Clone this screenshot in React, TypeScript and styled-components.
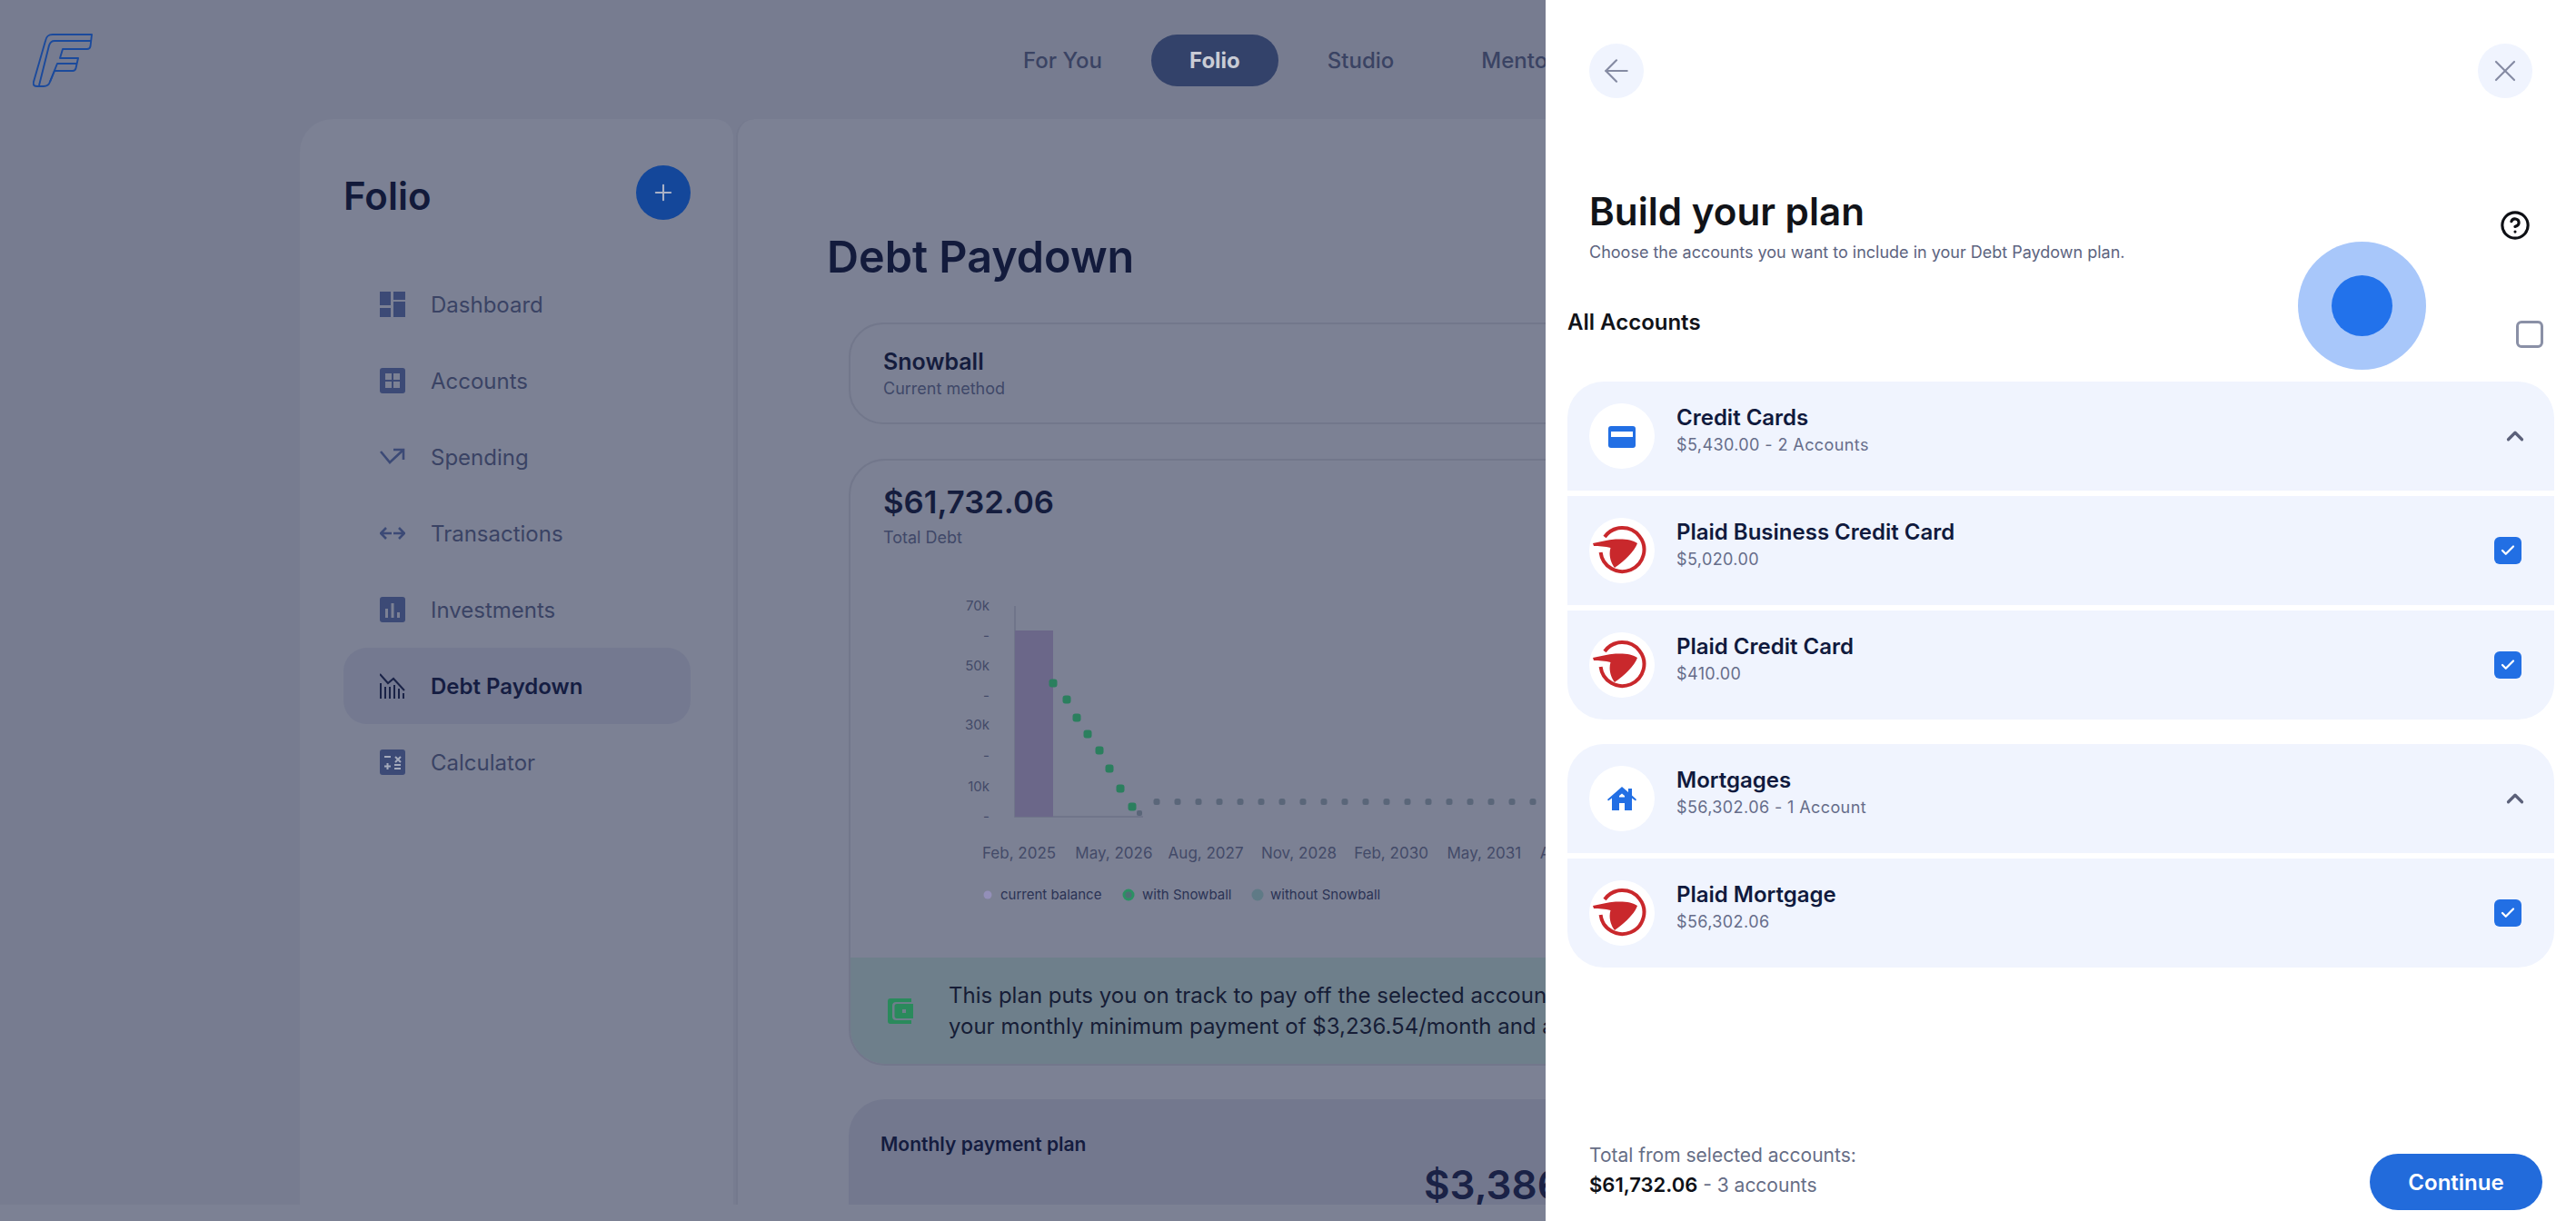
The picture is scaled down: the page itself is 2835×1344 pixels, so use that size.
import React from "react";
import styled, { createGlobalStyle } from "styled-components";
import { ArrowLeft, X, CircleHelp, ChevronUp, Plus, Check } from "lucide-react";

const Global = createGlobalStyle`
  html, body { margin: 0; padding: 0; background: #7c8194; }
  body { font-family: Inter, "Noto Sans", sans-serif; }
  * { box-sizing: border-box; }
`;

const Page = styled.div`
  position: relative;
  width: 2835px;
  height: 1344px;
  overflow: hidden;
  background: #7c8194;
`;
const Shell = styled.div`
  height: 1326px;
  background: #777c90;
  display: flex;
  flex-direction: column;
  overflow: hidden;
`;
const TopBar = styled.header`
  height: 131px;
  flex: none;
  display: flex;
  align-items: flex-start;
  padding: 37px 0 0 36px;
`;
const LogoMark = styled.svg`
  width: 66px;
  height: 59px;
  flex: none;
`;
const TopNav = styled.nav`
  display: flex;
  gap: 12px;
  margin: 1px 0 0 982px;
`;
const TopLink = styled.a<{ $active?: boolean }>`
  height: 57px;
  padding: 0 42px;
  border-radius: 29px;
  display: flex;
  align-items: center;
  font-size: 24px;
  font-weight: ${(p) => (p.$active ? 700 : 500)};
  color: ${(p) => (p.$active ? "#c9ccd5" : "#3a4363")};
  background: ${(p) => (p.$active ? "#33426a" : "transparent")};
`;
const Body = styled.div`
  flex: 1;
  min-height: 0;
  display: flex;
  gap: 3px;
  padding-left: 330px;
`;
const Sidebar = styled.aside`
  width: 477px;
  flex: none;
  background: #7c8194;
  border-radius: 36px 20px 0 0;
  padding: 51px 47px 0 48px;
`;
const SideHead = styled.div`
  height: 60px;
  display: flex;
  align-items: center;
  justify-content: space-between;
  margin-bottom: 51px;
`;
const SideTitle = styled.h2`
  margin: 6px 0 0;
  font-size: 42px;
  font-weight: 600;
  color: #121a3a;
`;
const RoundAdd = styled.button`
  width: 60px;
  height: 60px;
  border: 0;
  padding: 0;
  border-radius: 50%;
  background: #14479a;
  color: #a9b1c6;
  display: flex;
  align-items: center;
  justify-content: center;
`;
const SideItem = styled.a<{ $active?: boolean }>`
  height: 84px;
  display: flex;
  align-items: center;
  gap: 28px;
  padding-left: 40px;
  border-radius: 26px;
  font-size: 24px;
  font-weight: ${(p) => (p.$active ? 600 : 400)};
  color: ${(p) => (p.$active ? "#151d42" : "#3a4364")};
  background: ${(p) => (p.$active ? "#747990" : "transparent")};
`;
const SideIcon = styled.svg`
  width: 28px;
  height: 28px;
  flex: none;
`;
const Main = styled.main`
  flex: 1;
  min-width: 0;
  background: #7c8194;
  border-left: 2px solid #74798d;
  border-radius: 20px 0 0 0;
  padding: 122px 120px 0 122px;
  overflow: hidden;
`;
const PageTitle = styled.h1`
  margin: 0 0 42px -24px;
  height: 60px;
  line-height: 60px;
  font-size: 48.500px;
  font-weight: 600;
  color: #131b3c;
`;
const MethodCard = styled.section`
  height: 112px;
  border: 2px solid #72778b;
  border-radius: 38px;
  padding: 25px 36px;
  margin-bottom: 38px;
`;
const MethodName = styled.div`
  font-size: 25px;
  line-height: 32px;
  font-weight: 600;
  color: #141c3d;
`;
const MethodHint = styled.div`
  font-size: 18px;
  line-height: 24px;
  margin-top: 2px;
  color: #3f4868;
`;
const DebtCard = styled.section`
  height: 668px;
  border: 2px solid #72778b;
  border-radius: 40px;
  display: flex;
  flex-direction: column;
  overflow: hidden;
  margin-bottom: 37px;
`;
const DebtHead = styled.div`
  padding: 23px 36px 0;
`;
const DebtValue = styled.div`
  font-size: 34.700px;
  line-height: 44px;
  font-weight: 600;
  color: #151d3e;
`;
const DebtLabel = styled.div`
  margin-top: 6px;
  font-size: 18px;
  line-height: 24px;
  color: #404868;
`;
const ChartSvg = styled.svg`
  display: block;
  width: 1000px;
  height: 360px;
  margin: 46px 0 0 36px;
  flex: none;
`;
const AxisText = styled.text<{ $small?: boolean }>`
  font-family: Inter, sans-serif;
  font-size: ${(p) => (p.$small ? 15 : 17)}px;
  fill: #434a68;
`;
const LegendText = styled.text`
  font-family: Inter, sans-serif;
  font-size: 15px;
  fill: #2b3354;
`;
const Notice = styled.div`
  margin-top: auto;
  height: 117px;
  background: #6e7f8b;
  display: flex;
  align-items: center;
  gap: 38px;
  padding-left: 40px;
  font-size: 24px;
  line-height: 34px;
  color: #161d36;
  white-space: nowrap;
`;
const NoticeIcon = styled.svg`
  width: 30px;
  height: 30px;
  flex: none;
`;
const PlanCard = styled.section`
  height: 200px;
  background: #73788e;
  border-radius: 40px;
  padding: 36px 35px;
  position: relative;
`;
const PlanLabel = styled.div`
  font-size: 21px;
  line-height: 28px;
  font-weight: 600;
  color: #141c3f;
`;
const PlanValue = styled.div`
  margin: 3px 0 0 598px;
  font-size: 44px;
  line-height: 54px;
  font-weight: 600;
  color: #1a2246;
`;

const Drawer = styled.aside`
  position: absolute;
  top: 0;
  right: 0;
  bottom: 0;
  width: 1134px;
  background: #ffffff;
  display: flex;
  flex-direction: column;
`;
const DrawerTop = styled.div`
  display: flex;
  justify-content: space-between;
  padding: 48px 48px 0;
`;
const CircleBtn = styled.button`
  width: 60px;
  height: 60px;
  border: 0;
  padding: 0;
  border-radius: 50%;
  background: #f0f4fe;
  color: #858ba3;
  display: flex;
  align-items: center;
  justify-content: center;
`;
const Intro = styled.div`
  display: flex;
  justify-content: space-between;
  align-items: flex-start;
  padding: 0 50px 0 48px;
  margin-top: 98px;
  height: 83px;
`;
const DrawerTitle = styled.h2`
  margin: 0;
  font-size: 42.200px;
  line-height: 54px;
  font-weight: 600;
  color: #111318;
`;
const DrawerSub = styled.p`
  margin: 6px 0 0;
  font-size: 18px;
  line-height: 24px;
  color: #5d6480;
`;
const HelpWrap = styled.div`
  margin-top: 25px;
  color: #0d0f14;
  display: flex;
`;
const AllRow = styled.div`
  display: flex;
  justify-content: space-between;
  align-items: flex-start;
  height: 43px;
  margin: 50px 0 38px;
  padding: 0 36px 0 24px;
  font-size: 24px;
  line-height: 32px;
  font-weight: 600;
  color: #111318;
`;
const EmptyBox = styled.span`
  width: 30px;
  height: 30px;
  margin-top: 14px;
  border: 3px solid #8a90a6;
  border-radius: 6px;
  background: #fff;
`;
const Groups = styled.div`
  display: flex;
  flex-direction: column;
  gap: 27px;
  margin: 0 24px;
`;
const Group = styled.div`
  display: flex;
  flex-direction: column;
  gap: 6px;
  border-radius: 40px;
  overflow: hidden;
`;
const Row = styled.div`
  height: 120px;
  background: #f0f4fe;
  display: flex;
  align-items: center;
  gap: 24px;
  padding: 0 36px 0 24px;
`;
const Badge = styled.div`
  width: 72px;
  height: 72px;
  flex: none;
  border-radius: 50%;
  background: #fff;
`;
const BadgeArt = styled.svg`
  display: block;
  width: 72px;
  height: 72px;
`;
const RowText = styled.div`
  flex: 1;
  min-width: 0;
  margin-bottom: 14px;
`;
const RowTitle = styled.div`
  font-size: 24px;
  line-height: 32px;
  font-weight: 600;
  color: #101a3d;
`;
const RowSub = styled.div`
  margin-top: 1px;
  font-size: 18px;
  line-height: 26px;
  letter-spacing: 0.4px;
  color: #666d8a;
`;
const Chevron = styled.div`
  color: #5b6079;
  display: flex;
  margin-right: -8px;
`;
const TickBox = styled.span`
  width: 30px;
  height: 30px;
  border-radius: 6px;
  background: #226fe4;
  color: #fff;
  display: flex;
  align-items: center;
  justify-content: center;
`;
const Footer = styled.div`
  margin-top: auto;
  display: flex;
  justify-content: space-between;
  align-items: flex-end;
  padding: 0 37px 12px 48px;
`;
const Totals = styled.div`
  margin-bottom: 11px;
  font-size: 21px;
  line-height: 32px;
  color: #666d85;
`;
const TotalsValue = styled.strong`
  font-size: 22px;
  font-weight: 600;
  color: #0e1016;
`;
const ContinueBtn = styled.button`
  width: 190px;
  height: 62px;
  border: 0;
  border-radius: 31px;
  background: #226bdb;
  color: #fff;
  font-family: inherit;
  font-size: 24px;
  font-weight: 600;
`;
const Pulse = styled.div`
  position: absolute;
  left: 828px;
  top: 266px;
  width: 141px;
  height: 141px;
  border-radius: 50%;
  background: #a8c7fa;
  display: flex;
  align-items: center;
  justify-content: center;
`;
const PulseCore = styled.div`
  width: 67px;
  height: 67px;
  border-radius: 50%;
  background: #2272eb;
`;

const ICON = "#3c4a76";

const icons: Record<string, React.ReactNode> = {
  dashboard: (
    <g fill={ICON}>
      <rect x="0" y="0" width="12" height="15" />
      <rect x="15" y="0" width="13" height="9" />
      <rect x="15" y="11" width="13" height="17" />
      <rect x="0" y="18" width="12" height="10" />
    </g>
  ),
  accounts: (
    <g>
      <rect width="28" height="28" rx="3" fill={ICON} />
      <g fill="#7c8194">
        <rect x="6" y="6" width="7" height="7" />
        <rect x="15" y="6" width="7" height="7" />
        <rect x="6" y="15" width="7" height="7" />
        <rect x="15" y="15" width="7" height="7" />
      </g>
    </g>
  ),
  spending: (
    <g fill="none" stroke={ICON} strokeWidth="2.6">
      <polyline points="1,8 11,20 25,7" />
      <polyline points="15,6 26,6 26,17" />
    </g>
  ),
  transactions: (
    <g fill="none" stroke={ICON} strokeWidth="2.6">
      <path d="M13 14H1M7 8L1 14L7 20" />
      <path d="M15 14H27M21 8L27 14L21 20" />
    </g>
  ),
  investments: (
    <g>
      <rect width="28" height="28" rx="3" fill={ICON} />
      <g fill="#7c8194">
        <rect x="6" y="13" width="3" height="10" />
        <rect x="12.5" y="7" width="3" height="16" />
        <rect x="19" y="17" width="3" height="6" />
      </g>
    </g>
  ),
  debt: (
    <g fill="none" stroke="#1a2347" strokeWidth="2">
      <polyline points="0,1 9,11 15,6 27,19" />
      <path d="M1 11V28M6 15V28M11 15V28M16 13V28M21 17V28M26 22V28" />
    </g>
  ),
  calculator: (
    <g>
      <rect width="28" height="28" rx="3" fill={ICON} />
      <g stroke="#a5abbc" strokeWidth="2" fill="none">
        <path d="M5 8H12M8.500 15V22M5 18.500H12M17 14L23 8M17 8L23 14" />
        <path d="M16 17H23M16 21H23" />
      </g>
    </g>
  ),
};

const sideItems = [
  ["dashboard", "Dashboard"],
  ["accounts", "Accounts"],
  ["spending", "Spending"],
  ["transactions", "Transactions"],
  ["investments", "Investments"],
  ["debt", "Debt Paydown"],
  ["calculator", "Calculator"],
];

const PlaidMark = () => (
  <BadgeArt viewBox="0 0 72 72">
    <path d="M17 21A24 24 0 1 1 12.600 38" fill="none" stroke="#c9282c" strokeWidth="4" />
    <path
      d="M4 28C12 26.500 20 24 29 23.500C39 23 48 24 53 28C50 37 38 48 28 55C24 50 21 41 23.500 33C18 31.500 10 31 5 31Z"
      fill="#c9282c"
    />
  </BadgeArt>
);
const CardMark = () => (
  <BadgeArt viewBox="0 0 72 72">
    <rect x="21" y="25" width="30" height="24" rx="3" fill="#226fe4" />
    <rect x="24" y="31" width="24" height="6" fill="#fff" />
  </BadgeArt>
);
const HomeMark = () => (
  <BadgeArt viewBox="0 0 72 72">
    <path
      d="M20 37L36 23L43 29V25H47V32.500L52 37L51 38.500L47 35.500V49H39V41H33V49H25V35.500L21 38.500Z"
      fill="#226fe4"
    />
    <path d="M33 33L36 30.500L39 33V34.500H33Z" fill="#fff" />
  </BadgeArt>
);

const greenDots = [
  [1159, 752], [1174, 770], [1185, 790], [1197, 808],
  [1210, 826], [1221, 846], [1233, 868], [1246, 888],
];
const flatDots = Array.from({ length: 22 }, (_, i) => 1273 + i * 23);
const months = ["Feb, 2025", "May, 2026", "Aug, 2027", "Nov, 2028", "Feb, 2030", "May, 2031", "Aug, 2032"];
const yLabels: [string, number][] = [
  ["70k", 667], ["-", 700], ["50k", 733], ["-", 766],
  ["30k", 798], ["-", 832], ["10k", 866], ["-", 899],
];

const Chart = () => (
  <ChartSvg viewBox="972 650 1000 360">
    {yLabels.map(([t, y], i) => (
      <AxisText key={i} $small x={1089} y={y + 5} textAnchor="end">
        {t}
      </AxisText>
    ))}
    <path d="M1117 667V899H1258" fill="none" stroke="#6c7186" strokeWidth="1.500" />
    <rect x="1117" y="694" width="42" height="205" fill="#6b6789" />
    {greenDots.map(([x, y]) => (
      <rect key={x} x={x - 4.5} y={y - 4.5} width="9" height="9" rx="3" fill="#2b7f5e" />
    ))}
    {flatDots.map((x) => (
      <rect key={x} x={x - 3.5} y={879} width="7" height="7" rx="2.500" fill="#5a6679" />
    ))}
    <rect x="1251" y="892" width="6" height="6" rx="2" fill="#5a6679" />
    {months.map((m, i) => (
      <AxisText key={m} x={1081 + i * 102.300} y={945}>
        {m}
      </AxisText>
    ))}
    <circle cx="1087" cy="985" r="4.500" fill="#938fb8" />
    <LegendText x={1101} y={990}>current balance</LegendText>
    <circle cx="1242" cy="985" r="5" fill="#4d6f74" stroke="#2b9163" strokeWidth="3" />
    <LegendText x={1257} y={990}>with Snowball</LegendText>
    <circle cx="1384" cy="985" r="6.500" fill="#5f7a86" />
    <LegendText x={1398} y={990}>without Snowball</LegendText>
  </ChartSvg>
);

type Account = { name: string; amount: string };
type AccountGroup = { title: string; summary: string; mark: React.ReactNode; accounts: Account[] };

const groups: AccountGroup[] = [
  {
    title: "Credit Cards",
    summary: "$5,430.00 - 2 Accounts",
    mark: <CardMark />,
    accounts: [
      { name: "Plaid Business Credit Card", amount: "$5,020.00" },
      { name: "Plaid Credit Card", amount: "$410.00" },
    ],
  },
  {
    title: "Mortgages",
    summary: "$56,302.06 - 1 Account",
    mark: <HomeMark />,
    accounts: [{ name: "Plaid Mortgage", amount: "$56,302.06" }],
  },
];

export default function App() {
  return (
    <Page>
      <Global />
      <Shell>
        <TopBar>
          <LogoMark viewBox="0 0 66 59">
            <g fill="none" stroke="#1b4a9c" strokeWidth="1.900" strokeLinejoin="round">
              <path d="M65 1H22C17 1 15 3 14 8L1 53C0 57 2 58 5 58H12C16 58 18 56 19 53L24 41H44C46 41 47 40 47.500 38L50 27H30L33 17H60C62 17 63 16 63.500 14Z" />
              <path d="M64 8H24C20 8 19 10 18 13L7 57" />
              <path d="M48 33H27L19 53" />
            </g>
          </LogoMark>
          <TopNav>
            <TopLink>For You</TopLink>
            <TopLink $active>Folio</TopLink>
            <TopLink>Studio</TopLink>
            <TopLink>Mentor</TopLink>
          </TopNav>
        </TopBar>
        <Body>
          <Sidebar>
            <SideHead>
              <SideTitle>Folio</SideTitle>
              <RoundAdd>
                <Plus size={28} strokeWidth={1.8} />
              </RoundAdd>
            </SideHead>
            {sideItems.map(([key, label]) => (
              <SideItem key={key} $active={key === "debt"}>
                <SideIcon viewBox="0 0 28 28">{icons[key]}</SideIcon>
                {label}
              </SideItem>
            ))}
          </Sidebar>
          <Main>
            <PageTitle>Debt Paydown</PageTitle>
            <MethodCard>
              <MethodName>Snowball</MethodName>
              <MethodHint>Current method</MethodHint>
            </MethodCard>
            <DebtCard>
              <DebtHead>
                <DebtValue>$61,732.06</DebtValue>
                <DebtLabel>Total Debt</DebtLabel>
              </DebtHead>
              <Chart />
              <Notice>
                <NoticeIcon viewBox="0 0 30 30">
                  <path
                    d="M4 1H27V5H10C7.500 5 6 6.500 6 9V21C6 23.500 7.500 25 10 25H27V29H4C2 29 1 28 1 26V4C1 2 2 1 4 1Z"
                    fill="#2a8a5c"
                  />
                  <path
                    fillRule="evenodd"
                    d="M11 7H29V23H11C9.500 23 8.500 22 8.500 20.500V9.500C8.500 8 9.500 7 11 7ZM17 13V17H21V13Z"
                    fill="#2a8a5c"
                  />
                </NoticeIcon>
                <div>
                  This plan puts you on track to pay off the selected accounts
                  <br />
                  your monthly minimum payment of $3,236.54/month and a
                </div>
              </Notice>
            </DebtCard>
            <PlanCard>
              <PlanLabel>Monthly payment plan</PlanLabel>
              <PlanValue>$3,386</PlanValue>
            </PlanCard>
          </Main>
        </Body>
      </Shell>
      <Drawer>
        <DrawerTop>
          <CircleBtn>
            <ArrowLeft size={40} strokeWidth={1.3} />
          </CircleBtn>
          <CircleBtn>
            <X size={40} strokeWidth={1.3} />
          </CircleBtn>
        </DrawerTop>
        <Intro>
          <div>
            <DrawerTitle>Build your plan</DrawerTitle>
            <DrawerSub>Choose the accounts you want to include in your Debt Paydown plan.</DrawerSub>
          </div>
          <HelpWrap>
            <CircleHelp size={34} strokeWidth={2.2} />
          </HelpWrap>
        </Intro>
        <AllRow>
          All Accounts
          <EmptyBox />
        </AllRow>
        <Groups>
          {groups.map((g) => (
            <Group key={g.title}>
              <Row>
                <Badge>{g.mark}</Badge>
                <RowText>
                  <RowTitle>{g.title}</RowTitle>
                  <RowSub>{g.summary}</RowSub>
                </RowText>
                <Chevron>
                  <ChevronUp size={30} strokeWidth={2.6} />
                </Chevron>
              </Row>
              {g.accounts.map((a) => (
                <Row key={a.name}>
                  <Badge>
                    <PlaidMark />
                  </Badge>
                  <RowText>
                    <RowTitle>{a.name}</RowTitle>
                    <RowSub>{a.amount}</RowSub>
                  </RowText>
                  <TickBox>
                    <Check size={18} strokeWidth={3} />
                  </TickBox>
                </Row>
              ))}
            </Group>
          ))}
        </Groups>
        <Footer>
          <Totals>
            Total from selected accounts:
            <br />
            <TotalsValue>$61,732.06</TotalsValue> - 3 accounts
          </Totals>
          <ContinueBtn>Continue</ContinueBtn>
        </Footer>
        <Pulse>
          <PulseCore />
        </Pulse>
      </Drawer>
    </Page>
  );
}
